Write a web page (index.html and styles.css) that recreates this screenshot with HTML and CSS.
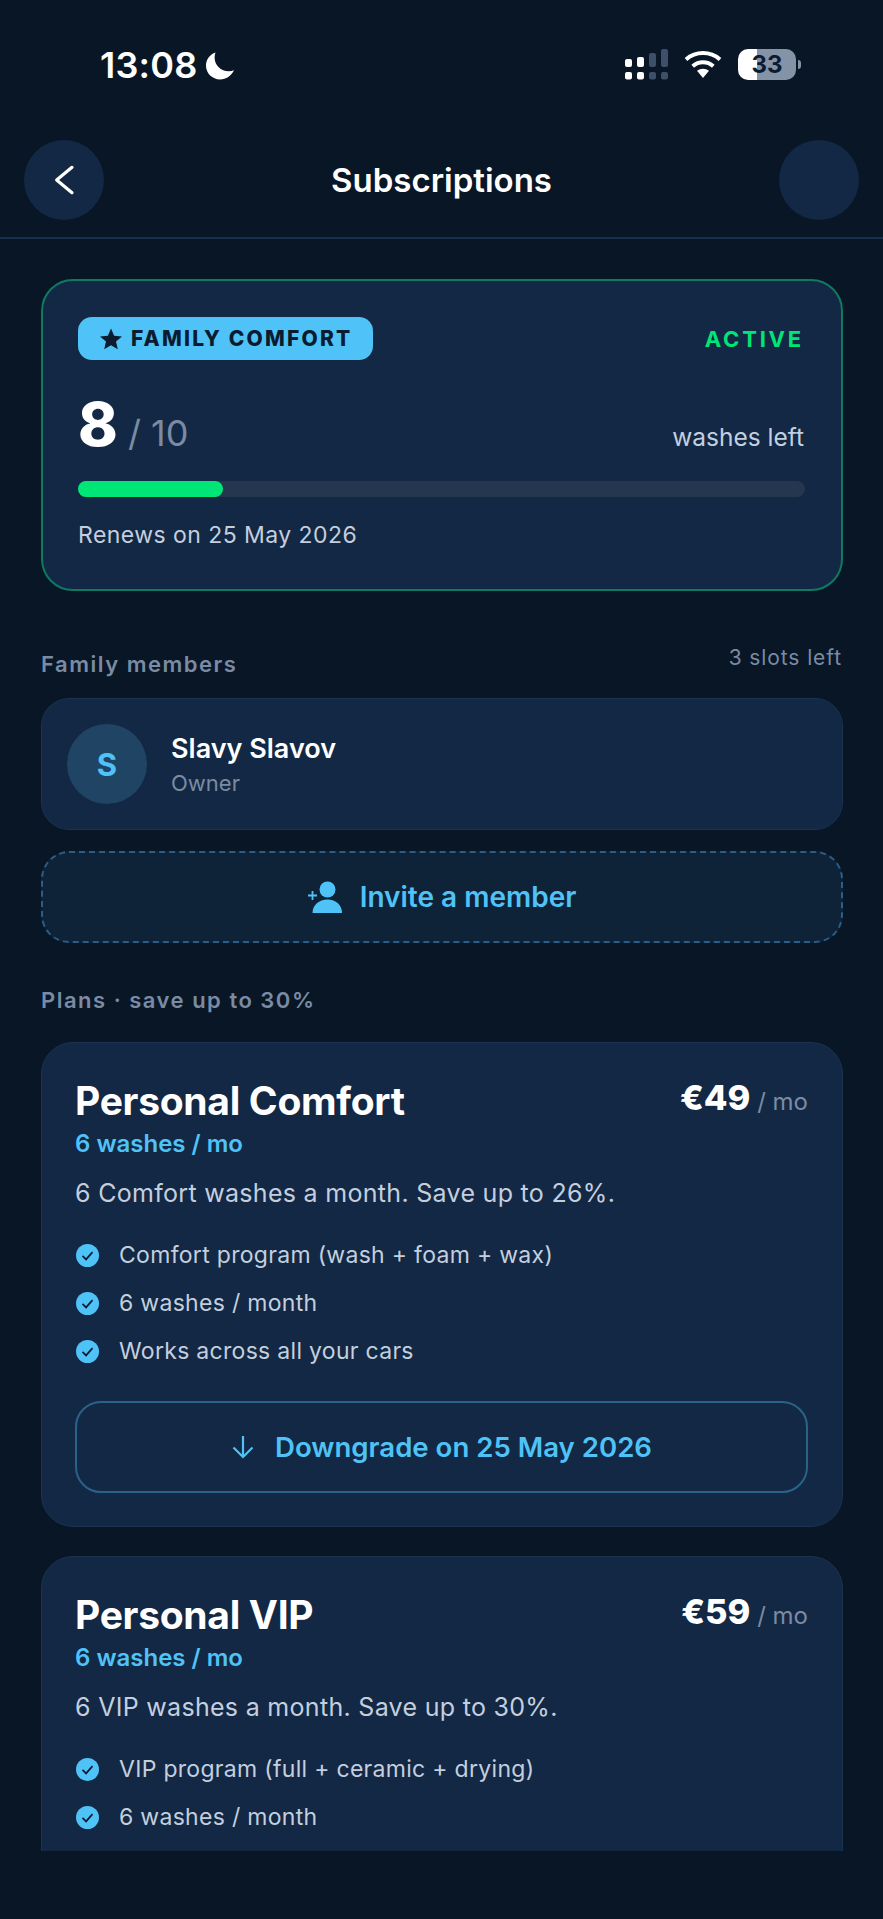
FILE: index.html
```html
<!DOCTYPE html>
<html lang="en">

<head>
    <meta charset="UTF-8">
    <meta name="viewport" content="width=device-width, initial-scale=1.0">
    <title>Subscriptions</title>
    <link rel="stylesheet" href="styles.css">
</head>

<body>
    <div class="status-bar">
        <div class="status-left">
            <span class="status-time">13:08</span>
            <svg class="moon" viewBox="0 0 28 28"><path d="M9.5 0.5C3.8 2.4 0 7.6 0 13.6 0 21.6 6.4 27.5 14 27.5c6.200 0 11.300-3.600 14-9.200-1.600 0.700-3.400 1-5.300 1C14.900 19.300 8.600 13.300 8.600 5.600c0-1.800 0.300-3.500 0.900-5.100z" fill="#fff"/></svg>
        </div>
        <div class="status-right">
            <svg class="signal" viewBox="0 0 44 31">
                <rect x="0" y="10" width="7" height="8" rx="2" fill="#fff"/>
                <rect x="12" y="8" width="7" height="10" rx="2" fill="#fff"/>
                <rect x="24" y="4" width="7" height="14" rx="2" fill="#3d4f69"/>
                <rect x="36" y="0" width="7" height="18" rx="2" fill="#3d4f69"/>
                <rect x="0" y="23" width="7" height="7.500" rx="2" fill="#fff"/>
                <rect x="12" y="23" width="7" height="7.500" rx="2" fill="#fff"/>
                <rect x="24" y="23" width="7" height="7.500" rx="2" fill="#3d4f69"/>
                <rect x="36" y="23" width="7" height="7.500" rx="2" fill="#3d4f69"/>
            </svg>
            <svg class="wifi" viewBox="0 0 38 27">
                <path d="M19 27l-6-7.200c3.500-2.900 8.500-2.900 12 0z" fill="#fff"/>
                <path d="M8.700 15.200c6-5.300 14.600-5.300 20.600 0" fill="none" stroke="#fff" stroke-width="4"/>
                <path d="M2 8.400c9.800-8.400 24.200-8.400 34 0" fill="none" stroke="#fff" stroke-width="4"/>
            </svg>
            <div class="battery">
                <div class="battery-body"><span>33</span></div>
                <div class="battery-nub"></div>
            </div>
        </div>
    </div>

    <div class="top-bar">
        <button class="round-button">
            <svg viewBox="0 0 24 24" width="32" height="32"><path d="M18 2.500L6.500 12 18 21.500" fill="none" stroke="#fff" stroke-width="2.400" stroke-linecap="round" stroke-linejoin="round"/></svg>
        </button>
        <h1>Subscriptions</h1>
        <div class="round-button"></div>
    </div>

    <div class="content">
        <div class="current-card">
            <div class="current-head">
                <span class="tier-badge">
                    <svg viewBox="0 0 24 24" width="24" height="24"><path d="M12 1.500l3.100 7.200 7.900 0.700-6 5.200 1.800 7.700-6.800-4-6.800 4 1.800-7.700-6-5.200 7.900-0.700z" fill="#0b1c30"/></svg>
                    FAMILY COMFORT
                </span>
                <span class="active-label">ACTIVE</span>
            </div>
            <div class="washes-row">
                <div><span class="washes-count">8</span><span class="washes-total"> / 10</span></div>
                <span class="washes-label">washes left</span>
            </div>
            <div class="progress"><div class="progress-fill" style="width: 20%"></div></div>
            <div class="renews">Renews on 25 May 2026</div>
        </div>

        <div class="section-head">
            <span class="section-title">Family members</span>
            <span class="slots-left">3 slots left</span>
        </div>

        <div class="member-card">
            <div class="avatar">S</div>
            <div>
                <div class="member-name">Slavy Slavov</div>
                <div class="member-role">Owner</div>
            </div>
        </div>

        <div class="invite-button">
            <svg viewBox="0 0 34 32" width="34" height="32">
                <circle cx="19.500" cy="8.500" r="8" fill="#4fc3f7"/>
                <path d="M4.500 32c0-8 6.500-13.500 15-13.500S34 24 34 32z" fill="#4fc3f7"/>
                <path d="M0 14.500h9M4.500 10v9" stroke="#4fc3f7" stroke-width="1.800"/>
            </svg>
            Invite a member
        </div>

        <div class="section-title plans-title">Plans · save up to 30%</div>

        <div class="plan-card">
            <div class="plan-head">
                <div>
                    <div class="plan-name">Personal Comfort</div>
                    <div class="plan-washes">6 washes / mo</div>
                </div>
                <div><span class="plan-price">€49</span><span class="plan-period"> / mo</span></div>
            </div>
            <div class="plan-desc">6 Comfort washes a month. Save up to 26%.</div>
            <ul class="plan-features">
                <li><svg class="check" viewBox="0 0 24 24"><circle cx="12" cy="12" r="12" fill="#4fc3f7"/><path d="M6.800 12.400l3.700 3.700 6.700-7.600" fill="none" stroke="#0b1c30" stroke-width="1.800"/></svg>Comfort program (wash + foam + wax)</li>
                <li><svg class="check" viewBox="0 0 24 24"><circle cx="12" cy="12" r="12" fill="#4fc3f7"/><path d="M6.800 12.400l3.700 3.700 6.700-7.600" fill="none" stroke="#0b1c30" stroke-width="1.800"/></svg>6 washes / month</li>
                <li><svg class="check" viewBox="0 0 24 24"><circle cx="12" cy="12" r="12" fill="#4fc3f7"/><path d="M6.800 12.400l3.700 3.700 6.700-7.600" fill="none" stroke="#0b1c30" stroke-width="1.800"/></svg>Works across all your cars</li>
            </ul>
            <div class="downgrade-button">
                <svg viewBox="0 0 24 24" width="24" height="24"><path d="M12 1v21M2.500 12.500L12 22l9.500-9.500" fill="none" stroke="#4fc3f7" stroke-width="2.200"/></svg>
                Downgrade on 25 May 2026
            </div>
        </div>

        <div class="plan-card">
            <div class="plan-head">
                <div>
                    <div class="plan-name">Personal VIP</div>
                    <div class="plan-washes">6 washes / mo</div>
                </div>
                <div><span class="plan-price">€59</span><span class="plan-period"> / mo</span></div>
            </div>
            <div class="plan-desc">6 VIP washes a month. Save up to 30%.</div>
            <ul class="plan-features">
                <li><svg class="check" viewBox="0 0 24 24"><circle cx="12" cy="12" r="12" fill="#4fc3f7"/><path d="M6.800 12.400l3.700 3.700 6.700-7.600" fill="none" stroke="#0b1c30" stroke-width="1.800"/></svg>VIP program (full + ceramic + drying)</li>
                <li><svg class="check" viewBox="0 0 24 24"><circle cx="12" cy="12" r="12" fill="#4fc3f7"/><path d="M6.800 12.400l3.700 3.700 6.700-7.600" fill="none" stroke="#0b1c30" stroke-width="1.800"/></svg>6 washes / month</li>
            </ul>
        </div>
    </div>
</body>

</html>
```

FILE: styles.css
```css
/* Subscriptions screen */
body {
    margin: 0;
    padding: 0;
    height: 1919px;
    overflow: hidden;
    font-family: 'Inter', 'Liberation Sans', sans-serif;
    background-color: #081626;
    color: #fff;
}

.status-bar {
    height: 100px;
    box-sizing: border-box;
    padding: 49px 82px 0 100px;
    display: flex;
    justify-content: space-between;
    align-items: flex-start;
}

.status-left {
    display: flex;
    align-items: center;
    gap: 9px;
    height: 32px;
}

.status-time {
    font-size: 36px;
    font-weight: 600;
    letter-spacing: 0.2px;
}

.moon {
    width: 28px;
    height: 28px;
    margin-top: 2px;
}

.status-right {
    display: flex;
    align-items: flex-start;
}

.signal {
    width: 44px;
    height: 31px;
    margin-right: 15px;
}

.wifi {
    width: 38px;
    height: 27px;
    margin-top: 2px;
    margin-right: 16px;
}

.battery {
    display: flex;
    align-items: center;
}

.battery-body {
    width: 58px;
    height: 31px;
    border-radius: 10px;
    background: linear-gradient(to right, #fff 33%, #8593a7 33%);
    color: #0b1c30;
    font-size: 24px;
    font-weight: 700;
    line-height: 31px;
    text-align: center;
}

.battery-nub {
    width: 3px;
    height: 9px;
    margin-left: 2px;
    border-radius: 0 3px 3px 0;
    background-color: #8593a7;
}

.top-bar {
    display: flex;
    justify-content: space-between;
    align-items: center;
    padding: 40px 24px 17px;
    border-bottom: 2px solid #15304d;
}

.top-bar h1 {
    margin: 0;
    font-size: 33px;
    font-weight: 600;
}

.round-button {
    width: 80px;
    height: 80px;
    padding: 0;
    border: none;
    border-radius: 50%;
    background-color: #132844;
    display: flex;
    align-items: center;
    justify-content: center;
}

.content {
    height: 1612px;
    box-sizing: border-box;
    padding: 40px 40px 0 41px;
    overflow: hidden;
}

.current-card {
    height: 312px;
    box-sizing: border-box;
    padding: 36px 36px 0 35px;
    border: 2px solid #0f7a62;
    border-radius: 32px;
    background-color: #132844;
}

.current-head {
    display: flex;
    justify-content: space-between;
    align-items: center;
}

.tier-badge {
    display: flex;
    align-items: center;
    gap: 8px;
    height: 43px;
    padding: 0 21px;
    border-radius: 14px;
    background-color: #4fc3f7;
    color: #0b1c30;
    font-size: 21px;
    font-weight: 800;
    letter-spacing: 2.2px;
}

.active-label {
    margin-right: 1px;
    color: #00e676;
    font-size: 22px;
    font-weight: 700;
    letter-spacing: 2.8px;
}

.washes-row {
    display: flex;
    justify-content: space-between;
    align-items: center;
    height: 77px;
    margin-top: 25px;
    margin-bottom: 19px;
}

.washes-count {
    font-size: 60px;
    font-weight: 800;
}

.washes-total {
    font-size: 36px;
    font-weight: 400;
    color: #7a8ba3;
}

.washes-label {
    margin-top: 26px;
    margin-right: 1px;
    font-size: 24.500px;
    color: #c3cfdf;
}

.progress {
    height: 16px;
    border-radius: 8px;
    background-color: #25374f;
}

.progress-fill {
    height: 100%;
    border-radius: 8px;
    background-color: #00e676;
}

.renews {
    margin-top: 24px;
    font-size: 23px;
    letter-spacing: 0.45px;
    color: #c3cfdf;
}

.section-head {
    display: flex;
    justify-content: space-between;
    align-items: flex-start;
    margin-top: 60px;
    margin-bottom: 21px;
}

.section-title {
    font-size: 22px;
    font-weight: 600;
    letter-spacing: 1.5px;
    color: #7a8ba3;
}

.slots-left {
    margin-top: -6px;
    margin-right: 1px;
    font-size: 21px;
    letter-spacing: 0.9px;
    color: #7a8ba3;
}

.member-card {
    display: flex;
    align-items: center;
    gap: 24px;
    height: 132px;
    box-sizing: border-box;
    padding: 0 25px;
    border: 1px solid #1a3350;
    border-radius: 28px;
    background-color: #132844;
}

.avatar {
    width: 80px;
    height: 80px;
    border-radius: 50%;
    background-color: #1f4464;
    color: #4fc3f7;
    font-size: 31px;
    font-weight: 700;
    display: flex;
    align-items: center;
    justify-content: center;
}

.member-name {
    font-size: 27px;
    font-weight: 600;
    margin-bottom: 5px;
}

.member-role {
    font-size: 22px;
    color: #7a8ba3;
}

.invite-button {
    display: flex;
    align-items: center;
    justify-content: center;
    gap: 18px;
    height: 92px;
    box-sizing: border-box;
    margin-top: 21px;
    border: 2px dashed #2a5d87;
    border-radius: 28px;
    background-color: #0e2238;
    color: #4fc3f7;
    font-size: 28px;
    font-weight: 600;
}

.plans-title {
    margin-top: 44px;
    margin-bottom: 29px;
}

.plan-card {
    box-sizing: border-box;
    height: 485px;
    margin-bottom: 29px;
    padding: 34px 34px 0 33px;
    border: 1px solid #1a3350;
    border-radius: 32px;
    background-color: #132844;
}

.plan-head {
    display: flex;
    justify-content: space-between;
    align-items: flex-start;
}

.plan-name {
    font-size: 39px;
    font-weight: 700;
    letter-spacing: -0.3px;
}

.plan-washes {
    margin-top: 5px;
    font-size: 24px;
    font-weight: 600;
    color: #4fc3f7;
}

.plan-price {
    font-size: 34.500px;
    font-weight: 800;
}

.plan-period {
    font-size: 24px;
    color: #7a8ba3;
}

.plan-desc {
    margin-top: 20px;
    font-size: 25px;
    letter-spacing: 0.3px;
    color: #c3cfdf;
}

.plan-features {
    list-style: none;
    margin: 23px 0 0;
    padding: 0;
}

.plan-features li {
    display: flex;
    align-items: center;
    gap: 20px;
    height: 48px;
    font-size: 23px;
    letter-spacing: 0.3px;
    color: #c3cfdf;
}

.check {
    width: 23px;
    height: 23px;
    margin-left: 1px;
    flex-shrink: 0;
}

.downgrade-button {
    display: flex;
    align-items: center;
    justify-content: center;
    gap: 20px;
    height: 92px;
    box-sizing: border-box;
    margin-top: 26px;
    border: 2px solid #2a6389;
    border-radius: 26px;
    color: #4fc3f7;
    font-size: 27.600px;
    font-weight: 600;
}
```
